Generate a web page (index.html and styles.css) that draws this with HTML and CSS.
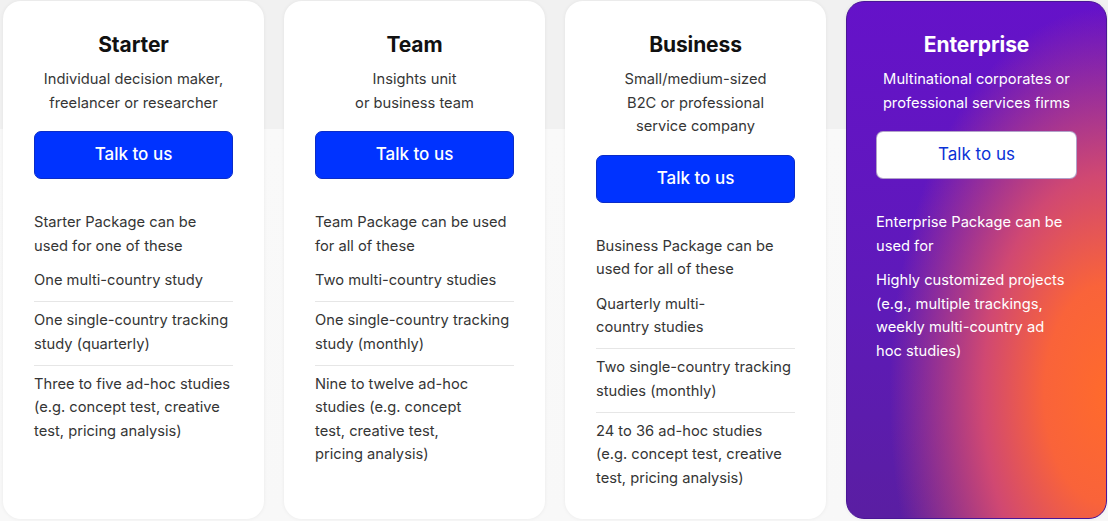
FILE: index.html
```html
<!DOCTYPE html>
<html lang="en">
<head>
<meta charset="utf-8">
<title>Plans</title>
<link rel="stylesheet" href="styles.css">
</head>
<body>
<main class="plans">
  <section class="card">
    <h2 class="title">Starter</h2>
    <p class="sub">Individual decision maker,<br>freelancer or researcher</p>
    <a class="btn">Talk to us</a>
    <p class="intro">Starter Package can be<br>used for one of these</p>
    <ul class="list">
      <li>One multi-country study</li>
      <li>One single-country tracking<br>study (quarterly)</li>
      <li>Three to five ad-hoc studies<br>(e.g. concept test, creative<br>test, pricing analysis)</li>
    </ul>
  </section>
  <section class="card">
    <h2 class="title">Team</h2>
    <p class="sub">Insights unit<br>or business team</p>
    <a class="btn">Talk to us</a>
    <p class="intro">Team Package can be used<br>for all of these</p>
    <ul class="list">
      <li>Two multi-country studies</li>
      <li>One single-country tracking<br>study (monthly)</li>
      <li>Nine to twelve ad-hoc<br>studies (e.g. concept<br>test, creative test,<br>pricing analysis)</li>
    </ul>
  </section>
  <section class="card">
    <h2 class="title">Business</h2>
    <p class="sub">Small/medium-sized<br>B2C or professional<br>service company</p>
    <a class="btn">Talk to us</a>
    <p class="intro">Business Package can be<br>used for all of these</p>
    <ul class="list">
      <li>Quarterly multi-<br>country studies</li>
      <li>Two single-country tracking<br>studies (monthly)</li>
      <li>24 to 36 ad-hoc studies<br>(e.g. concept test, creative<br>test, pricing analysis)</li>
    </ul>
  </section>
  <section class="card card-ent">
    <h2 class="title">Enterprise</h2>
    <p class="sub">Multinational corporates or<br>professional services firms</p>
    <a class="btn btn-white">Talk to us</a>
    <p class="intro">Enterprise Package can be<br>used for</p>
    <ul class="list">
      <li>Highly customized projects<br>(e.g., multiple trackings,<br>weekly multi-country ad<br>hoc studies)</li>
    </ul>
  </section>
</main>
</body>
</html>
```
FILE: styles.css
```css
* { box-sizing: border-box; }
html, body { margin: 0; padding: 0; }
body {
  width: 1108px;
  height: 521px;
  overflow: hidden;
  font-family: "Inter", "Liberation Sans", sans-serif;
  background: linear-gradient(#f1f1f1 0, #f1f1f1 129px, #f9f9f9 129px, #f8f8f8 100%);
  color: #353535;
}
.plans {
  display: grid;
  grid-template-columns: repeat(4, 261px);
  gap: 20px;
  padding: 1px 0 0 3px;
}
.card {
  height: 518px;
  background: #fff;
  border-radius: 18px;
  box-shadow: 0 0 4px rgba(0,0,0,0.06);
  padding: 30px 31px 0;
  display: flex;
  flex-direction: column;
}
.title {
  margin: 0;
  font-size: 21px;
  line-height: 28px;
  font-weight: 700;
  color: #111;
  text-align: center;
  letter-spacing: -0.1px;
}
.sub {
  margin: 9px 0 0;
  font-size: 14.7px;
  line-height: 23.5px;
  text-align: center;
  color: #363636;
}
.btn {
  margin-top: 16px;
  height: 48px;
  display: flex;
  align-items: center;
  justify-content: center;
  background: #0033ff;
  border: 1px solid #0a2cc8;
  border-radius: 7px;
  color: #fff;
  font-size: 17px;
  font-weight: 500;
  padding-bottom: 2px;
}
.intro {
  margin: 32px 0 0;
  font-size: 14.7px;
  line-height: 23.5px;
}
.list {
  list-style: none;
  margin: 4px 0 0;
  padding: 0;
}
.list li {
  font-size: 14.7px;
  line-height: 23.5px;
  padding: 7px 0 8.5px;
  border-bottom: 1px solid #e6e6e6;
}
.list li:last-child { border-bottom: none; }

.card-ent {
  border: 1px solid #4a1696;
  color: #fff;
  background:
    radial-gradient(ellipse 95% 85% at 100% 76%, #ff6a2c 0%, #f9633a 25%, #d04872 50%, rgba(120,30,180,0) 88%),
    linear-gradient(180deg, #6512c9 0%, #5e1ab8 60%, #5a1ea2 100%);
  padding: 29px 29px 0;
}
.card-ent .title, .card-ent .sub { color: #fff; }
.btn-white {
  background: #fff;
  color: #0a32d6;
  border: 1px solid rgba(60,20,120,0.4);
  font-weight: 400;
}
```
